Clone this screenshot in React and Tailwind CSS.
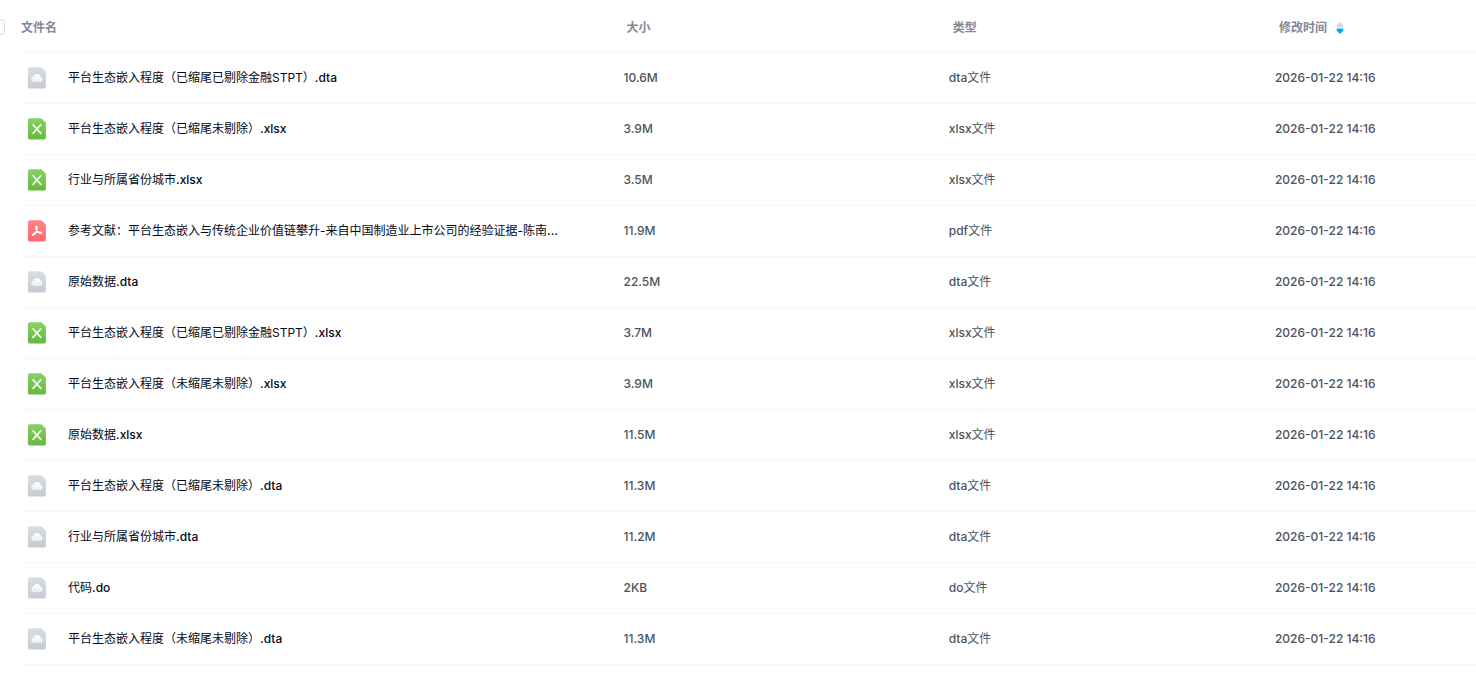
import { useState } from 'react'

const FILES = [
  { stem: '平台生态嵌入程度（已缩尾已剔除金融STPT）', size: '10.6M', ext: 'dta' },
  { stem: '平台生态嵌入程度（已缩尾未剔除）', size: '3.9M', ext: 'xlsx' },
  { stem: '行业与所属省份城市', size: '3.5M', ext: 'xlsx' },
  { stem: '参考文献：平台生态嵌入与传统企业价值链攀升-来自中国制造业上市公司的经验证据-陈南', suffix: '...', size: '11.9M', ext: 'pdf' },
  { stem: '原始数据', size: '22.5M', ext: 'dta' },
  { stem: '平台生态嵌入程度（已缩尾已剔除金融STPT）', size: '3.7M', ext: 'xlsx' },
  { stem: '平台生态嵌入程度（未缩尾未剔除）', size: '3.9M', ext: 'xlsx' },
  { stem: '原始数据', size: '11.5M', ext: 'xlsx' },
  { stem: '平台生态嵌入程度（已缩尾未剔除）', size: '11.3M', ext: 'dta' },
  { stem: '行业与所属省份城市', size: '11.2M', ext: 'dta' },
  { stem: '代码', size: '2KB', ext: 'do' },
  { stem: '平台生态嵌入程度（未缩尾未剔除）', size: '11.3M', ext: 'dta' },
]

const MODIFIED = '2026-01-22 14:16'

const ICON_COLORS = {
  xlsx: ['#87d068', '#67b83f'],
  pdf: ['#ff8585', '#ff6672'],
  other: ['#d8dde3', '#c6cad2'],
}

function FileIcon({ ext }) {
  const kind = ICON_COLORS[ext] ? ext : 'other'
  const [top, bottom] = ICON_COLORS[kind]
  return (
    <svg width="20" height="22" viewBox="0 0 20 22" className="shrink-0" aria-hidden="true">
      <defs>
        <linearGradient id={`page-${kind}`} x1="0" y1="0" x2="0" y2="1">
          <stop offset="0" stopColor={top} />
          <stop offset="1" stopColor={bottom} />
        </linearGradient>
        <linearGradient id="cloud" x1="0" y1="0" x2="0" y2="1">
          <stop offset="0" stopColor="#fff" />
          <stop offset="1" stopColor="#eceef1" />
        </linearGradient>
      </defs>
      <path d="M3 .3h10.600c.5 0 .9.2 1.300.5l3.400 3.300c.4.4.6.8.6 1.300v14.100c0 1.200-.8 2.100-2 2.100H3c-1.200 0-2.100-.9-2.100-2.100V2.400C.9 1.200 1.800.3 3 .3z" fill={`url(#page-${kind})`} />
      {kind === 'other' && (
        <path d="M6.700 15a2.700 2.700 0 0 1-.6-5.300 4 4 0 0 1 7.600 0 2.700 2.700 0 0 1-.6 5.300z" fill="url(#cloud)" />
      )}
      {kind === 'xlsx' && (
        <path d="M6 6.800l7.800 8.600M13.800 6.800L6 15.400" fill="none" stroke="#f4ffef" strokeWidth="1.700" strokeLinecap="round" />
      )}
      {kind === 'pdf' && (
        <path d="M9.400 6.300c1.400 0 .8 3.200-.3 5.400-1 2-2.300 3.900-3.300 3.600-1.200-.4 1.100-2.200 3.600-2.800 2.600-.6 5.300-.5 5.200.5-.1 1-2.500.2-3.800-1.200-1.500-1.600-2.800-5.500-1.400-5.500z" fill="none" stroke="#fff" strokeWidth="1.300" strokeLinejoin="round" />
      )}
    </svg>
  )
}

function SortArrows({ ascending }) {
  return (
    <svg width="8" height="12" viewBox="0 0 8 12" aria-hidden="true">
      <path d="M4 0l3 3c.9 1 .4 2.500-.6 2.500H1.600C.6 5.500.1 4 1 3z" fill={ascending ? '#06a7ff' : '#d4d7de'} />
      <path d="M4 12l3-3c.9-1 .4-2.500-.6-2.500H1.600C.6 6.500.1 8 1 9z" fill={ascending ? '#d4d7de' : '#06a7ff'} />
    </svg>
  )
}

export default function App() {
  const [allChecked, setAllChecked] = useState(false)
  const [ascending, setAscending] = useState(false)

  return (
    <main className="min-h-screen overflow-x-hidden bg-white font-['Inter','Noto_Sans_CJK_SC',sans-serif] text-xs">
      <table className="w-full table-fixed border-separate border-spacing-0 text-left">
        <colgroup>
          <col className="w-[21px]" />
          <col />
          <col className="w-[22.1%]" />
          <col className="w-[22.1%]" />
          <col className="w-[14.3%]" />
        </colgroup>
        <thead>
          <tr className="h-[53px] text-[#818999]">
            <th className="p-0">
              <input
                type="checkbox"
                aria-label="全选"
                checked={allChecked}
                onChange={e => setAllChecked(e.target.checked)}
                className="-ml-[11px] block size-4 appearance-none rounded border border-[#d9dae6] bg-white checked:bg-[#06a7ff]"
              />
            </th>
            <th className="border-b border-[#f7f8fa] px-0 pt-1 pb-0 font-bold">文件名</th>
            <th className="border-b border-[#f7f8fa] pt-1 pr-0 pb-0 pl-3.5 font-bold">大小</th>
            <th className="border-b border-[#f7f8fa] pt-1 pr-0 pb-0 pl-3.5 font-bold">类型</th>
            <th className="border-b border-[#f7f8fa] pt-1 pr-0 pb-0 pl-3.5 font-bold">
              <button
                type="button"
                onClick={() => setAscending(!ascending)}
                className="flex items-center gap-[9px] whitespace-nowrap"
              >
                修改时间
                <SortArrows ascending={ascending} />
              </button>
            </th>
          </tr>
        </thead>
        <tbody>
          {FILES.map(({ stem, suffix, size, ext }, i) => (
            <tr key={i} className="h-[51px] font-medium text-[#4b5360]">
              <td className="p-0" />
              <td className="border-b border-[#f7f8fa] py-0 pr-2 pl-[6px]">
                <div className="flex items-center gap-[21px]">
                  <FileIcon ext={ext} />
                  <a href="#" className="truncate text-[#03081a]">
                    <span className="font-normal">{stem}</span>{suffix ?? `.${ext}`}
                  </a>
                </div>
              </td>
              <td className="border-b border-[#f7f8fa] py-0 pr-0 pl-[11px]">{size}</td>
              <td className="border-b border-[#f7f8fa] py-0 pr-0 pl-[10px]">
                {ext}<span className="font-normal">文件</span>
              </td>
              <td className="border-b border-[#f7f8fa] py-0 pr-0 pl-[10px] whitespace-nowrap">{MODIFIED}</td>
            </tr>
          ))}
        </tbody>
      </table>
    </main>
  )
}
